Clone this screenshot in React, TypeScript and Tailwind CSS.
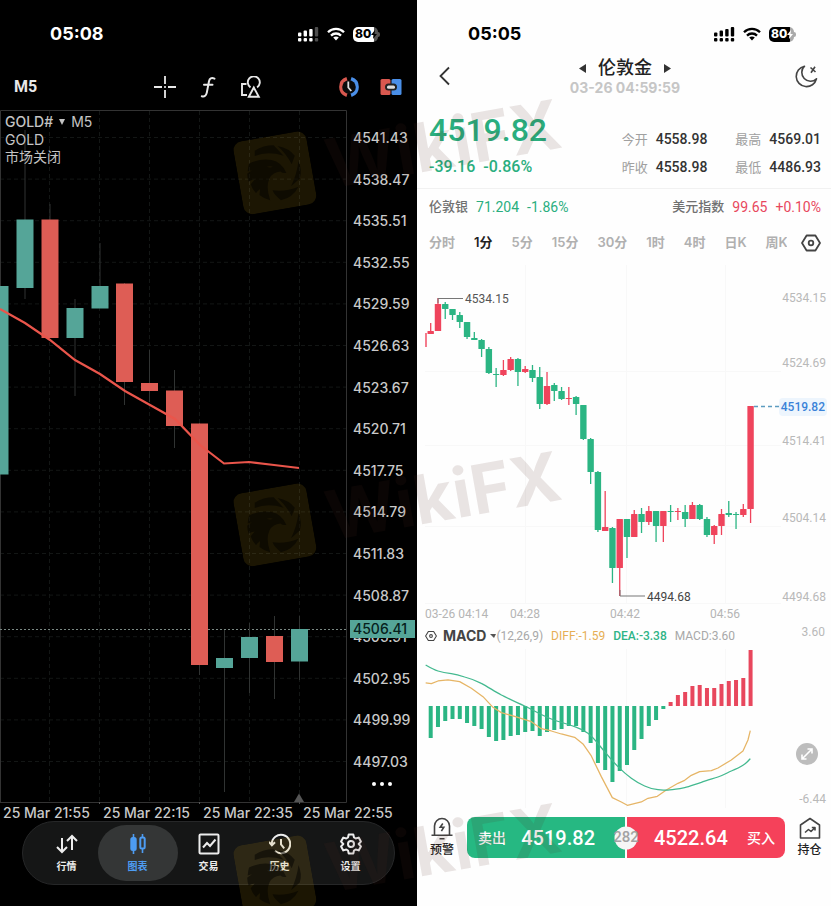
import React, { useState } from 'react';

type Candle = [x: number, open: number, close: number, high: number, low: number, up: boolean];

const LEFT_CANDLES: Candle[] = [
  [0, 286, 474.5, 286, 474.5, true],
  [25, 219.5, 288, 130, 299, true],
  [50, 219.5, 338, 204, 338, false],
  [75, 308, 338, 299, 396, true],
  [100, 286, 308.5, 243, 308, true],
  [124.5, 283.5, 382, 283, 405, false],
  [149.5, 383, 391, 350, 402, false],
  [174.5, 390.5, 426, 370, 448, false],
  [199.5, 423.5, 665, 423, 675, false],
  [224.5, 658, 668, 630, 792, true],
  [249.5, 637, 658, 623, 693, true],
  [274.5, 636, 662, 616, 699, false],
  [299.5, 629, 661.5, 616, 680, true],
];

// body top, body bottom, wick top, wick bottom, rising
const RIGHT_CANDLES: [number, number, number, number, boolean][] = [
  [331, 334, 323, 334, true],
  [304, 331, 298, 331, true],
  [304, 309, 302, 319, false],
  [309, 315, 309, 320, false],
  [315, 322, 312, 328, false],
  [322, 337, 322, 339, false],
  [338, 340, 332, 340, false],
  [340, 349, 339, 357, false],
  [349, 373, 347, 374, false],
  [374, 375, 368, 387, false],
  [370, 375, 360, 376, true],
  [359, 370, 357, 371, true],
  [359, 372, 358, 386, false],
  [369, 372, 366, 373, true],
  [370, 378, 365, 382, false],
  [377, 404, 367, 409, false],
  [386, 404, 372, 405, true],
  [385, 391, 383, 401, false],
  [391, 399, 387, 400, false],
  [398, 399, 387, 405, true],
  [397, 404, 396, 415, false],
  [405, 439, 405, 440, false],
  [439, 472, 438, 484, false],
  [472, 530, 471, 532, false],
  [527, 531, 491, 531, true],
  [528, 568, 527, 583, false],
  [519, 568, 519, 596, true],
  [519, 537, 519, 558, false],
  [514, 537, 510, 537, true],
  [514, 522, 508, 533, false],
  [511, 522, 506, 525, true],
  [511, 526, 511, 542, false],
  [511, 526, 511, 542, true],
  [511, 512, 505, 522, false],
  [511, 512, 508, 520, true],
  [512, 519, 505, 527, false],
  [505, 519, 502, 519, true],
  [505, 519, 504, 520, false],
  [519, 535, 517, 537, false],
  [526, 535, 525, 544, true],
  [514, 526, 509, 535, true],
  [513, 515, 501, 517, false],
  [514, 515, 512, 529, false],
  [509, 515, 504, 517, true],
  [406, 509, 406, 523, true],
];

const HISTOGRAM = [
  -32, -21, -15, -13, -13, -17, -20, -23, -31, -35, -34, -30, -29, -26, -25, -30, -26, -24, -23, -20,
  -20, -26, -37, -57, -64, -76, -65, -59, -44, -33, -20, -14, -3, 4, 11, 14, 20, 21, 18, 18, 22, 25,
  26, 28, 56,
];

const STEP = 7.27;
const FIRST_X = 430.7;

const LEFT_PRICES = [
  '4541.43', '4538.47', '4535.51', '4532.55', '4529.59', '4526.63', '4523.67', '4520.71',
  '4517.75', '4514.79', '4511.83', '4508.87', '4505.91', '4502.95', '4499.99', '4497.03',
];
const LEFT_TIMES = ['25 Mar 21:55', '25 Mar 22:15', '25 Mar 22:35', '25 Mar 22:55'];
const PERIODS = ['分时', '1分', '5分', '15分', '30分', '1时', '4时', '日K', '周K'];

const SignalIcon = ({ weak }: { weak?: boolean }) => (
  <svg width="21" height="15" viewBox="0 0 21 15" fill="currentColor">
    {[4, 6, 7.5, 9.5].map((h, i) => (
      <g key={i} opacity={weak && i === 3 ? 0.3 : 1}>
        <rect x={i * 5.6} y={9.5 - h} width="3.4" height={h} rx="1" />
        <rect x={i * 5.6} y="11" width="3.4" height="3.4" rx="1" />
      </g>
    ))}
  </svg>
);

const WifiIcon = () => (
  <svg width="18" height="14" viewBox="0 0 18 14" fill="none" stroke="currentColor" strokeWidth="2.3">
    <path d="M1 5.2C5.4.8 12.6.8 17 5.2" />
    <path d="M4 8.6c2.8-2.8 7.2-2.8 10 0" />
    <path d="M9 13.6 6.2 10.6c1.6-1.5 4-1.5 5.6 0z" fill="currentColor" stroke="none" />
  </svg>
);

const Battery = ({ dark }: { dark?: boolean }) => (
  <div className="flex items-center">
    <div
      className={`flex h-[15px] w-[25px] items-center rounded-[5px] pl-0.5 text-xs font-extrabold leading-none ${
        dark
          ? 'bg-[linear-gradient(90deg,#fff_85%,#555_85%)] text-black'
          : 'bg-[linear-gradient(90deg,#000_85%,#aaa_85%)] text-white'
      }`}
    >
      80
      <svg width="6" height="9" viewBox="0 0 6 9" fill="currentColor" className="shrink-0">
        <path d="M4 0 0 5h2.400L2 9l4-5H3.500z" />
      </svg>
    </div>
    <span className={`h-[5px] w-[2px] rounded-r-full ${dark ? 'bg-[#555]' : 'bg-[#aaa]'}`} />
  </div>
);

const StatusIcons = ({ dark }: { dark?: boolean }) => (
  <div className="flex items-center gap-2">
    <SignalIcon weak={dark} />
    <WifiIcon />
    <Battery dark={dark} />
  </div>
);

const HexIcon = ({ size }: { size: number }) => (
  <svg width={size} height={size} viewBox="0 0 20 20" fill="none" stroke="currentColor" strokeWidth="1.800" strokeLinejoin="round">
    <path d="M5.600 2.500h8.800L19 10l-4.600 7.500H5.600L1 10z" />
    <circle cx="10" cy="10" r="2.300" />
  </svg>
);

const LeftToolbar = () => (
  <div className="flex h-[46px] items-center pl-3.5 pr-[15px] text-[#e8e8e8]">
    <button className="w-[140px] text-left font-[Roboto,sans-serif] text-base font-bold">M5</button>
    <div className="flex items-center gap-[21px]">
      <button aria-label="Crosshair">
        <svg width="22" height="22" viewBox="0 0 22 22" fill="none" stroke="currentColor" strokeWidth="1.800">
          <path d="M11 0v8M11 14v8M0 11h8M14 11h8M10.200 11h1.600" />
        </svg>
      </button>
      <button aria-label="Indicators">
        <svg width="22" height="22" viewBox="0 0 22 22" fill="none" stroke="currentColor" strokeWidth="2" strokeLinecap="round">
          <path d="M17.500 2.600c-3.200-1.300-4.900-.1-5.500 2.600L9.800 16.600c-.6 2.900-2.200 4.500-5 3.600M7 8.800h8.500" />
        </svg>
      </button>
      <button aria-label="Objects">
        <svg width="22" height="22" viewBox="0 0 22 22" fill="none" stroke="currentColor" strokeWidth="1.900">
          <path d="M6.500 8H2v11h5" />
          <path d="M10.500 11.400a6 6 0 1 1 6.600 0" />
          <path d="M13.800 11.500 8.800 20.700h10z" />
        </svg>
      </button>
    </div>
    <div className="ml-auto flex items-center gap-5">
      <button aria-label="Sessions">
        <svg width="22" height="22" viewBox="0 0 22 22" fill="none">
          <path d="M9 3A8.400 8.400 0 0 0 9 19" stroke="#d9584f" strokeWidth="4" />
          <path d="M13 3A8.400 8.400 0 0 1 13 19" stroke="#4a8fe8" strokeWidth="4" />
          <circle cx="11" cy="11" r="6.800" fill="#0b0b0b" />
          <path d="M10.300 5.500v6l3 3.500" stroke="#ddd" strokeWidth="1.800" />
        </svg>
      </button>
      <button aria-label="One click trading">
        <svg width="22" height="22" viewBox="0 0 22 22">
          <rect x="0.500" y="3" width="10" height="16" rx="1.500" fill="#d9584f" />
          <rect x="11.500" y="3" width="10" height="16" rx="1.500" fill="#4a8fe8" />
          <rect x="5" y="7.500" width="12" height="7" rx="3.500" fill="#222" />
          <rect x="7" y="9.500" width="8" height="3.200" rx="1.500" fill="#ddd" />
        </svg>
      </button>
    </div>
  </div>
);

const LeftChart = () => (
  <div className="flex h-[694px]">
    <div className="relative min-w-0 flex-1">
      <svg className="block h-full w-full" viewBox="0 110 347 694" preserveAspectRatio="none" fill="none">
        {LEFT_PRICES.map((p, i) => (
          <path key={p} d={`M0 ${137.500 + i * 41.600}H347`} stroke="#131615" strokeDasharray="4 3" />
        ))}
        {[49.5, 99.5, 149.5, 199.5, 249.5, 299.5].map((x) => (
          <path key={x} d={`M${x} 111V802`} stroke="#131615" strokeDasharray="4 3" />
        ))}
        <path d="M0.500 802V110.500H346.500V802.500H0" stroke="#333" />
        <path d="M99.500 802v2M199.500 802v2M299.500 802v2" stroke="#555" />
        <path d="M0 629.500H347" stroke="#7a8883" strokeDasharray="2 2" />
        {LEFT_CANDLES.map(([x, top, bottom, high, low, up]) => (
          <g key={x}>
            <path d={`M${x} ${high}V${low}`} stroke="#303332" />
            <rect x={x - 8.500} y={top} width="17" height={bottom - top} fill={up ? '#55a598' : '#de5d55'} />
          </g>
        ))}
        <path
          d="M0 309 25 323 50 340 75 360 100 374 125 391 150 405 175 419 200 445 224 463.500 249 462 274 465 299 468"
          stroke="#ea554b"
          strokeWidth="2.200"
        />
        <path d="M294 802 299 793.500 304 802z" fill="#555" />
      </svg>
      <div className="absolute left-[5px] top-[3px] text-sm leading-[18px] text-[#c4c4c4]">
        <button className="flex items-center gap-1.5">
          <span className="font-medium">GOLD#</span>
          <svg width="6" height="6" viewBox="0 0 6 6" fill="currentColor"><path d="M0 0h6L3 6z" /></svg>
          <span>M5</span>
        </button>
        <p>GOLD</p>
        <p className="leading-4">市场关闭</p>
      </div>
    </div>
    <div className="relative w-[70px] pt-[18px] text-sm font-medium leading-5 text-[#c9c9c9]">
      <div className="flex h-[644px] flex-col justify-between pl-1.5">
        {LEFT_PRICES.map((p) => (
          <span key={p}>{p}</span>
        ))}
      </div>
      <span className="absolute left-[3px] right-[2px] top-[510px] bg-[#55a598] pl-[3px] leading-[18px] text-[#06211c]">
        4506.41
      </span>
      <button aria-label="More" className="mx-auto mt-2.5 flex gap-1">
        <i className="size-1 rounded-full bg-white" />
        <i className="size-1 rounded-full bg-white" />
        <i className="size-1 rounded-full bg-white" />
      </button>
    </div>
  </div>
);

const navIcon = { width: 22, height: 22, viewBox: '0 0 22 22', fill: 'none', stroke: 'currentColor', strokeWidth: 2 };

const NAV = [
  {
    label: '行情',
    icon: (
      <svg {...navIcon}>
        <path d="M6 5v14M1 14l5 5 5-5M16 17V3M11 8l5-5 5 5" />
      </svg>
    ),
  },
  {
    label: '图表',
    icon: (
      <svg {...navIcon}>
        <path d="M6.500 1v20M15.500 1v3.500M15.500 16v4" strokeWidth="1.600" />
        <rect x="4.300" y="5" width="4.400" height="12" rx="1.500" fill="currentColor" />
        <rect x="13.300" y="4.500" width="4.400" height="11" rx="1.500" />
      </svg>
    ),
  },
  {
    label: '交易',
    icon: (
      <svg {...navIcon}>
        <rect x="1.500" y="1.500" width="19" height="19" rx="1" />
        <path d="M5 14.500 9 10l3 3 5.500-6.500" />
      </svg>
    ),
  },
  {
    label: '历史',
    icon: (
      <svg {...navIcon}>
        <path d="M2.800 11A9.200 9.200 0 1 1 6 18" />
        <path d="M0 9 2.900 12.300 6 9.300M12 6v5.500l3.200 3.800" />
      </svg>
    ),
  },
  {
    label: '设置',
    icon: (
      <svg {...navIcon} strokeLinejoin="round">
        <path d="M8.700 1.500h4.600l.7 3 1.700 1 3-.9 2.200 4-2.200 2.400 2.200 2.400-2.200 4-3-.9-1.700 1-.7 3H8.700l-.7-3-1.700-1-3 .9-2.200-4L3.300 11 1.100 8.600l2.200-4 3 .9 1.700-1z" />
        <circle cx="11" cy="11" r="3" />
      </svg>
    ),
  },
];

const LeftNav = () => {
  const [active, setActive] = useState('图表');
  return (
    <nav className="mx-[22px] flex h-16 items-center rounded-full border border-[#262728] bg-[#151616] px-2">
      {NAV.map(({ label, icon }) => (
        <div key={label} className="flex min-w-0 flex-1 justify-center">
          <button
            onClick={() => setActive(label)}
            className={`flex h-14 w-20 shrink-0 flex-col items-center justify-center gap-1 rounded-full text-[10px] font-bold leading-[14px] ${
              active === label ? 'bg-[#343636] text-[#4d9cf2]' : 'text-[#ededed]'
            }`}
          >
            {icon}
            {label}
          </button>
        </div>
      ))}
    </nav>
  );
};

const TerminalPhone = () => (
  <section className="flex min-w-0 flex-col bg-black pb-[21px] text-white">
    <div className="flex h-16 items-center justify-between pl-[50px] pr-[37px] pt-1">
      <span className="text-lg font-bold">05:08</span>
      <StatusIcons dark />
    </div>
    <LeftToolbar />
    <LeftChart />
    <div className="grid h-[17px] grid-cols-4 whitespace-nowrap pl-[3px] pr-3.5 text-sm font-medium leading-[17px] text-[#c9c9c9]">
      {LEFT_TIMES.map((t) => (
        <span key={t}>{t}</span>
      ))}
    </div>
    <LeftNav />
  </section>
);

const Quote = ({ label, value }: { label: string; value: string }) => (
  <div className="flex items-center justify-end gap-2">
    <dt className="text-[13px] text-[#a0a0a0]">{label}</dt>
    <dd className="font-[Roboto,sans-serif] text-sm font-medium text-[#333]">{value}</dd>
  </div>
);

const RightHeader = () => (
  <>
    <header className="flex items-center justify-between pl-4 pr-3">
      <button aria-label="Back">
        <svg width="24" height="24" viewBox="0 0 24 24" fill="none" stroke="#333" strokeWidth="1.800">
          <path d="M16 3.500 7.500 12l8.500 8.500" />
        </svg>
      </button>
      <div className="flex flex-col items-center">
        <h1 className="flex h-6 items-center gap-3 text-lg font-medium text-[#222]">
          <button aria-label="Previous">
            <svg width="7" height="9" viewBox="0 0 7 9" fill="#333"><path d="M7 0v9L0 4.500z" /></svg>
          </button>
          伦敦金
          <button aria-label="Next">
            <svg width="7" height="9" viewBox="0 0 7 9" fill="#333"><path d="M0 0v9l7-4.500z" /></svg>
          </button>
        </h1>
        <time className="h-4 text-sm font-bold leading-4 text-[#c6c6c6]">03-26 04:59:59</time>
      </div>
      <button aria-label="Night mode">
        <svg width="26" height="26" viewBox="0 0 26 26" fill="none" stroke="#444" strokeWidth="1.600" strokeLinejoin="round">
          <path d="M11.500 3.200A10.300 10.300 0 1 0 23.500 15.800 8.700 8.700 0 0 1 11.500 3.200z" />
          <path d="m17.500 4.500 5 4.500M22 3.800l-4 6" />
        </svg>
      </button>
    </header>
    <div className="flex items-end justify-between border-b border-[#f1f1f1] pb-[9px] pl-3 pr-2.5 pt-3.5">
      <div className="font-[Roboto,sans-serif] font-medium text-[#2aae7e]">
        <p className="mb-[5px] text-[32px] leading-10">4519.82</p>
        <p className="flex gap-2 text-base leading-6">
          <span>-39.16</span>
          <span>-0.86%</span>
        </p>
      </div>
      <dl className="grid grid-cols-2 gap-x-7 gap-y-1 leading-6">
        <Quote label="今开" value="4558.98" />
        <Quote label="最高" value="4569.01" />
        <Quote label="昨收" value="4558.98" />
        <Quote label="最低" value="4486.93" />
      </dl>
    </div>
    <div className="flex h-9 items-center justify-between pl-3 pr-2.5 font-[Roboto,'Noto_Sans_CJK_SC',sans-serif] text-sm">
      <p className="flex items-center gap-2 text-[#2aae7e]">
        <a href="#silver" className="text-[13px] font-medium text-[#707070]">伦敦银</a>
        <span>71.204</span>
        <span>-1.86%</span>
      </p>
      <p className="flex items-center gap-2 text-[#e8475d]">
        <a href="#usd" className="text-[13px] font-medium text-[#707070]">美元指数</a>
        <span>99.65</span>
        <span>+0.10%</span>
      </p>
    </div>
  </>
);

const PeriodTabs = () => {
  const [period, setPeriod] = useState('1分');
  return (
    <div className="flex h-9 items-center gap-3.5 pl-3 pr-2.5">
      <div className="flex min-w-0 flex-1 gap-[19px] overflow-hidden whitespace-nowrap text-[13px] font-semibold">
        {PERIODS.map((p) => (
          <button key={p} onClick={() => setPeriod(p)} className={p === period ? 'text-[#222]' : 'text-[#b0b0b0]'}>
            {p}
          </button>
        ))}
      </div>
      <button aria-label="Chart settings" className="text-[#444]">
        <HexIcon size={20} />
      </button>
    </div>
  );
};

const RightChart = () => (
  <div className="relative flex h-[344px] font-[Roboto,sans-serif] text-xs">
    <svg className="block h-full min-w-0 flex-1" viewBox="417 261 364 344" preserveAspectRatio="none" fill="none">
      <path d="M425 371.500H781M425 445.500H781M425 526.500H781M425 603.500H781" stroke="#f8f8f8" />
      <path d="M525.500 265V603M626.500 265V603M725.500 265V603" stroke="#f8f8f8" />
      <path d="M426 333V347" stroke="#ef445c" strokeWidth="1.400" />
      {RIGHT_CANDLES.map(([top, bottom, high, low, up], i) => {
        const x = FIRST_X + i * STEP;
        const color = up ? '#ef445c' : '#2bb583';
        return (
          <g key={i}>
            <path d={`M${x} ${high}V${low}`} stroke={color} strokeWidth="1.300" />
            <rect x={x - 3.200} y={top} width="6.400" height={bottom - top} rx="0.500" fill={color} />
          </g>
        );
      })}
      <path d="M438 303V298.500H463M620 590V596H645" stroke="#777" />
      <path d="M754 406.500H781" stroke="#5c9cc0" strokeWidth="1.400" strokeDasharray="4 3" />
      <text x="465" y="302.500" fill="#555">4534.15</text>
      <text x="647" y="600.500" fill="#444">4494.68</text>
    </svg>
    <div className="relative flex w-[50px] flex-col pr-[5px] pt-[29px] text-right leading-4 text-[#b9b9b9]">
      <span className="h-[65px]">4534.15</span>
      <span className="h-[78px]">4524.69</span>
      <span className="h-[78px]">4514.41</span>
      <span className="h-[79px]">4504.14</span>
      <span>4494.68</span>
      <span className="absolute right-1 top-[137px] rounded-sm bg-[#edf5fd] px-0.5 font-medium leading-[18px] text-[#3a82d8]">
        4519.82
      </span>
    </div>
  </div>
);

const MacdPanel = () => (
  <div className="font-[Roboto,sans-serif] text-xs">
    <div className="flex h-[26px] items-center gap-2 pl-2 pr-1.5">
      <button className="flex items-center gap-1.5 text-[#444]">
        <HexIcon size={12} />
        <span className="font-[Inter,sans-serif] text-sm font-bold">MACD</span>
      </button>
      <span className="-ml-1 flex items-center text-[#a8a8a8]">
        <svg width="6" height="6" viewBox="0 0 6 6" fill="#555"><path d="M0 1h6L4 5z" /></svg>
        (12,26,9)
      </span>
      <span className="text-[#e6ae55]">DIFF:-1.59</span>
      <span className="font-medium text-[#2fb487]">DEA:-3.38</span>
      <span className="text-[#a8a8a8]">MACD:3.60</span>
      <span className="ml-auto self-start leading-[18px] text-[#b9b9b9]">3.60</span>
    </div>
    <div className="flex h-40">
      <svg className="block h-full min-w-0 flex-1" viewBox="417 649 364 160" preserveAspectRatio="none" fill="none">
        <path d="M525.500 649V808M626.500 649V808M725.500 649V808" stroke="#f8f8f8" />
        {HISTOGRAM.map((h, i) => (
          <rect
            key={i}
            x={FIRST_X + i * STEP - 2}
            y={h > 0 ? 706 - h : 706}
            width="4"
            height={Math.abs(h)}
            fill={h > 0 ? '#e8475d' : '#2bb583'}
          />
        ))}
        <g transform="translate(418 600) scale(0.3333)" strokeWidth="3.800" strokeLinejoin="round">
          <path
            d="M23 249 40 251 60 243 90 240 125 245 160 265 195 290 225 322 250 338 290 349 340 365 370 386 400 393 430 402 470 412 495 432 520 468 550 530 583 593 610 606 628 616 670 606 690 595 718 589 745 570 780 550 800 541 820 526 845 515 880 512 900 504 940 480 975 453 990 420 997 392"
            stroke="#e6b566"
          />
          <path
            d="M23 195C45 208 50 210 60 213S85 219 100 221 125 226 140 231C155 235 175 242 190 250 210 260 230 275 250 285S295 308 320 318C345 330 370 345 400 357 425 367 450 372 470 380 485 385 495 390 510 400S545 438 560 455C575 472 585 485 600 500S625 524 640 535 665 552 680 558C695 565 708 568 720 569S740 572 755 570C770 569 785 566 800 563 815 560 833 552 850 547 865 541 885 536 900 531S925 520 940 513C953 508 965 503 975 496 985 490 990 484 997 476"
            stroke="#43b98f"
          />
        </g>
      </svg>
      <div className="flex w-[50px] flex-col items-end justify-between pb-0.5 pr-[5px] pt-[94px] leading-4 text-[#b9b9b9]">
        <button aria-label="Expand chart" className="mr-2 flex size-[22px] items-center justify-center rounded-full bg-[#bdbdbd]">
          <svg width="14" height="14" viewBox="0 0 14 14" fill="none" stroke="#fff" strokeWidth="1.600">
            <path d="M2 12 12 2M7.500 2H12v4.500M2 7.500V12h4.500" />
          </svg>
        </button>
        <span>-6.44</span>
      </div>
    </div>
  </div>
);

const TradeBar = () => (
  <div className="mt-2 flex h-[41px] pl-3 pr-[9px]">
    <button className="mr-3 flex w-[26px] shrink-0 flex-col items-center justify-between whitespace-nowrap text-xs font-medium leading-4 text-[#222]">
      <svg width="22" height="23" viewBox="0 0 22 23" fill="none" stroke="#444" strokeWidth="1.600">
        <path d="M3.500 18V9a7.500 7.500 0 0 1 15 0v9M.5 18.200h21M8.500 21.800h5" />
        <path d="m11.800 6.500-2.600 3.800h3.600l-2.400 3.800" />
      </svg>
      预警
    </button>
    <div className="relative grid flex-1 grid-cols-2 gap-0.5 text-sm font-medium text-white">
      <button className="flex items-center justify-between rounded-l-lg bg-[#26b882] pl-[11px] pr-[30px]">
        卖出
        <span className="font-[Roboto,sans-serif] text-xl">4519.82</span>
      </button>
      <button className="flex items-center justify-between rounded-r-lg bg-[#f5415a] pl-[27px] pr-2.5">
        <span className="font-[Roboto,sans-serif] text-xl">4522.64</span>
        买入
      </button>
      <span className="absolute left-1/2 top-1/2 flex size-[23px] -translate-x-1/2 -translate-y-1/2 items-center justify-center rounded-full bg-[#f6f6f6] font-[Roboto,sans-serif] text-[15px] text-[#a3a3a3]">
        282
      </span>
    </div>
    <button className="ml-3 flex w-[25px] shrink-0 flex-col items-center justify-between whitespace-nowrap text-xs font-medium leading-4 text-[#222]">
      <svg width="22" height="23" viewBox="0 0 22 23" fill="none" stroke="#444" strokeWidth="1.600" strokeLinejoin="round">
        <path d="M1.500 8 11 1.500 20.500 8v13h-19z" />
        <path d="m6 15.500 3.500-3 2.500 2 4-4M12.800 10.500H16v3" />
      </svg>
      持仓
    </button>
  </div>
);

const QuotePhone = () => (
  <section className="flex min-w-0 flex-col bg-[#fefefe] text-black">
    <div className="flex h-14 items-center justify-between pl-[51px] pr-[35px] pt-3">
      <span className="text-lg font-bold">05:05</span>
      <StatusIcons />
    </div>
    <RightHeader />
    <PeriodTabs />
    <RightChart />
    <div className="flex h-[18px] whitespace-nowrap pl-2 font-[Roboto,sans-serif] text-xs leading-[18px] text-[#b5b5b5]">
      <span className="w-[85px]">03-26 04:14</span>
      <span className="w-[100px]">04:28</span>
      <span className="w-[100px]">04:42</span>
      <span>04:56</span>
    </div>
    <MacdPanel />
    <TradeBar />
  </section>
);

const BrandMark = () => (
  <div className="h-[352px]">
    <div className="flex h-[76px] w-[326px] -rotate-10 items-center justify-between">
      <svg width="74" height="74" viewBox="42 38 220 220">
        <rect x="42" y="38" width="220" height="220" rx="28" fill="#c49a14" fillOpacity="0.14" />
        <g transform="rotate(10 152 148)" fill="#000" fillOpacity="0.5">
          <path d="M92 82Q118 66 148 66L178 97Q130 82 92 98z" />
          <path d="M160 68Q195 75 211 97L202 122Q185 90 160 68z" />
          <path d="M222 113Q234 140 226 165L200 188Q218 150 222 113z" />
          <path d="M145 200Q185 205 222 189 205 222 170 229 150 214 145 200z" />
          <path d="M75 120Q110 104 142 110 172 116 186 148 176 150 168 144 146 146 136 164 124 190 138 229 120 226 106 214L108 196Q98 204 96 208 84 196 80 182L92 168Q80 170 74 174 69 160 70 150L84 140 71 144Q72 130 75 120zM128 130Q138 134 146 130 138 126 128 130z" fillRule="evenodd" />
        </g>
      </svg>
      <span className="text-[68px] font-bold text-[#502a22]/12">WikiFX</span>
    </div>
  </div>
);

export default function App() {
  return (
    <main className="relative grid min-h-screen grid-cols-[417fr_414fr] overflow-hidden font-[Inter,'Noto_Sans_CJK_SC',sans-serif]">
      <TerminalPhone />
      <QuotePhone />
      <div aria-hidden="true" className="pointer-events-none absolute inset-0 overflow-hidden pl-[236px] pt-[113px]">
        <BrandMark />
        <BrandMark />
        <BrandMark />
      </div>
    </main>
  );
}
